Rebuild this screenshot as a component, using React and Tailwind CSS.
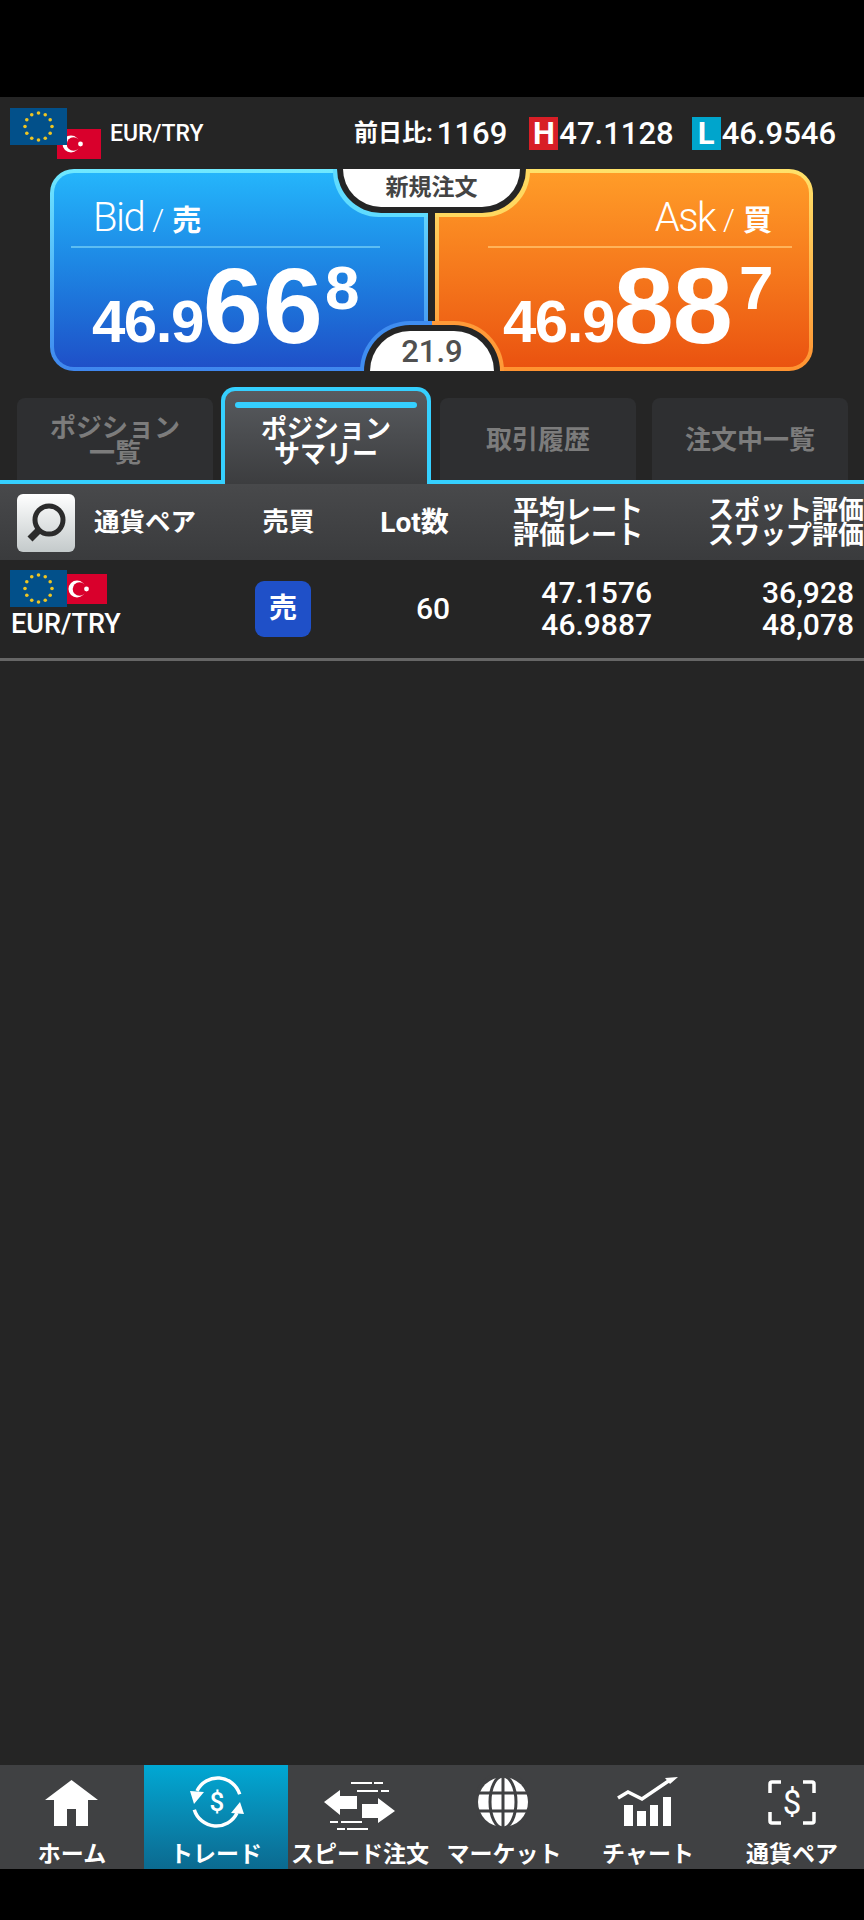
const eurStars = Array.from({ length: 12 }, (_, i) => i);

function EuFlag({ className }) {
    return (
        <svg viewBox="0 0 57 37" className={className}>
            <rect width="57" height="37" fill="#02508a" />
            {eurStars.map(i => (
                <circle key={i} cx={28.5 + 13.5 * Math.sin(i * Math.PI / 6)} cy={18.5 - 13.5 * Math.cos(i * Math.PI / 6)} r="1.8" fill="#eec523" />
            ))}
        </svg>
    );
}

function TrFlag({ className }) {
    return (
        <svg viewBox="0 0 44 30" className={className}>
            <rect width="44" height="30" fill="#d9002c" />
            <circle cx="14" cy="15" r="8.5" fill="#fff" />
            <circle cx="16.500" cy="15" r="6.8" fill="#d9002c" />
            <circle cx="23.500" cy="15" r="2.4" fill="#fff" />
        </svg>
    );
}

function HomeIcon() {
    return (
        <svg width="80" height="56" viewBox="0 0 80 56" fill="#fff">
            <path d="M39.500 5L66 25H56V51H44V34H35V51H22V25H13Z" />
        </svg>
    );
}

function TradeIcon() {
    return (
        <svg width="80" height="56" viewBox="0 0 80 56">
            <g transform="translate(41 27)">
                <path d="M-20 -11A23 23 0 0 1 22.700 -7.700M20 11A23 23 0 0 1 -22.700 7.700" fill="none" stroke="#fff" strokeWidth="3.500" />
                <path d="M-27 -11L-13 -10L-23 2ZM27 12L14 11L23 0Z" fill="#fff" />
                <text x="0" y="9" textAnchor="middle" fill="#fff" fontSize="26" fontWeight="500" fontFamily="Roboto, sans-serif">$</text>
            </g>
        </svg>
    );
}

function SpeedIcon() {
    return (
        <svg width="80" height="56" viewBox="0 0 80 56" fill="#fff">
            <path d="M4 27L20 15V21H37V34H20V40Z" />
            <path d="M75 36L58 23V29H42V43H58V48Z" />
            <path d="M31 8H52M54 8H63M37 16H58M61 16H69M10 47H18M21 47H42M17 54H25M27 54H48" stroke="#fff" strokeWidth="2" />
        </svg>
    );
}

function GlobeIcon() {
    return (
        <svg width="80" height="56" viewBox="0 0 80 56">
            <g transform="translate(39 27)" fill="none" stroke="#404143" strokeWidth="3">
                <circle r="25" fill="#fff" stroke="none" />
                <ellipse rx="13" ry="26" />
                <path d="M0 -26V26M-26 -9H26M-26 9H26" />
                <path d="M-13 -26Q-27 -14 -24 -9M13 -26Q27 -14 24 -9M-13 26Q-27 14 -24 9M13 26Q27 14 24 9" />
            </g>
        </svg>
    );
}

function ChartIcon() {
    return (
        <svg width="80" height="56" viewBox="0 0 80 56" fill="#fff">
            <path d="M16 30H25V51H16ZM29 36H38V51H29ZM42 30H50V51H42ZM55 22H63V51H55Z" />
            <path d="M10 23L20 17L34 24L62 5" fill="none" stroke="#fff" strokeWidth="3.500" />
            <path d="M57 3L70 2L62 9Z" />
        </svg>
    );
}

function PairIcon() {
    return (
        <svg width="80" height="56" viewBox="0 0 80 56">
            <path d="M18 18V9Q18 7 20 7H29M51 7H60Q62 7 62 9V18M18 37V46Q18 48 20 48H29M51 48H60Q62 48 62 46V37" fill="none" stroke="#fff" strokeWidth="3.500" />
            <text x="40" y="39" textAnchor="middle" fill="#fff" fontSize="33" fontFamily="Roboto, sans-serif">$</text>
        </svg>
    );
}

const navItems = [
    { label: 'ホーム', icon: HomeIcon },
    { label: 'トレード', icon: TradeIcon, active: true },
    { label: 'スピード注文', icon: SpeedIcon },
    { label: 'マーケット', icon: GlobeIcon },
    { label: 'チャート', icon: ChartIcon },
    { label: '通貨ペア', icon: PairIcon },
];

function QuotePanel({ side }) {
    const bid = side === 'bid';
    return (
        <div className={`w-[378px] h-[202px] p-[4px] rounded-[24px] ${bid ? 'bg-linear-to-b from-[#6fe9ff] to-[#3f86ee]' : 'bg-linear-to-b from-[#ffe26a] to-[#ff9230]'}`}>
            <div className={`h-full rounded-[20px] flex flex-col ${bid ? 'pl-[17px] pr-[44px] bg-linear-to-b from-[#25b5fb] to-[#1f50c8]' : 'pl-[49px] pr-[17px] bg-linear-to-b from-[#ff9c28] to-[#ea5210]'}`}>
                <div className={`h-[75px] border-b-2 flex items-end pb-[8px] font-light text-white ${bid ? 'border-[#5cbdf2] pl-[22px]' : 'border-[#ffb35a] justify-end pr-[20px]'}`}>
                    <span className="text-[40px] leading-[40px] tracking-[-1.5px]">{bid ? 'Bid' : 'Ask'}</span>
                    <span className="text-[30px] leading-[36px] mx-[8px]">/</span>
                    <span className="text-[29px] leading-[34px] font-bold">{bid ? '売' : '買'}</span>
                </div>
                <div className={`flex items-end text-white font-bold font-['Liberation_Sans',sans-serif] mt-[4px] leading-none ${bid ? 'pl-[21px]' : 'pl-[15px]'}`}>
                    <span className="text-[60px] tracking-[-1.5px] leading-none mb-[8px]">46.9</span>
                    <span className={`text-[108px] leading-none ${bid ? '' : 'tracking-[-1px]'}`}>{bid ? '66' : '88'}</span>
                    <span className={`text-[62px] leading-none mb-[41px] ${bid ? 'ml-[2px]' : 'ml-[7px]'}`}>{bid ? '8' : '7'}</span>
                </div>
            </div>
        </div>
    );
}

function SideTab({ children }) {
    return (
        <div className="w-[196px] h-[82px] pt-[3px] bg-[#2e2f31] rounded-t-[8px] flex items-center justify-center text-center text-[#7c7c7c] font-bold text-[26px] leading-[25px]">
            {children}
        </div>
    );
}

export default function App() {
    return (
        <div className="w-[864px] h-[1920px] bg-black pt-[97px] flex flex-col text-white font-['Roboto','Noto_Sans_CJK_JP',sans-serif]">
            <div className="flex-1 bg-[#252525] flex flex-col">
                {/* Header */}
                <div className="h-[72px] flex items-center font-medium">
                    <div className="relative w-[110px] h-[72px] shrink-0">
                        <EuFlag className="absolute left-[10px] top-[11px] w-[57px] h-[37px] z-10" />
                        <TrFlag className="absolute left-[57px] top-[32px] w-[44px] h-[30px]" />
                    </div>
                    <span className="text-[23px] pt-[3px]">EUR/TRY</span>
                    <div className="ml-auto pr-[28px] flex items-center text-[31px] leading-[33px]">
                        <span className="text-[24px] font-bold">前日比:</span>
                        <span className="ml-[4px]">1169</span>
                        <span className="ml-[22px] w-[29px] h-[33px] bg-[#d81e26] text-center font-bold">H</span>
                        <span className="ml-[1px]">47.1128</span>
                        <span className="ml-[18px] w-[29px] h-[33px] bg-[#00a5cc] text-center font-bold">L</span>
                        <span className="ml-[1px]">46.9546</span>
                    </div>
                </div>

                {/* Bid / Ask */}
                <div className="relative flex gap-[7px] pl-[50px]">
                    <QuotePanel side="bid" />
                    <QuotePanel side="ask" />
                    <div className="absolute left-[333px] top-0 w-[197px] h-[48px] rounded-b-[46px] bg-[linear-gradient(90deg,#5fdcff_50%,#ffd860_50%)]">
                        <div className="mx-[4px] h-[44px] rounded-b-[44px] bg-[#252525] px-[6px] pb-[6px]">
                            <div className="h-full rounded-b-[38px] bg-white flex items-center justify-center text-[#444] font-bold text-[23px]">新規注文</div>
                        </div>
                    </div>
                    <div className="absolute left-[428px] top-[44px] w-[7px] h-[5px] bg-[#252525]"></div>
                    <div className="absolute left-[360px] bottom-0 w-[144px] h-[50px] rounded-t-[52px] bg-[linear-gradient(90deg,#3f8df0_50%,#ff9a38_50%)]">
                        <div className="mx-[4px] mt-[4px] h-[46px] rounded-t-[50px] bg-[#252525] px-[6px] pt-[6px]">
                            <div className="h-[40px] rounded-t-[44px] bg-white flex items-center justify-center text-[#505050] font-medium text-[31px] leading-none">21.9</div>
                        </div>
                    </div>
                </div>

                {/* Tabs */}
                <div className="mt-[16px] h-[97px] flex items-end pl-[17px] border-b-4 border-[#35d0ff]">
                    <SideTab>ポジション<br />一覧</SideTab>
                    <div className="relative z-10 ml-[8px] mr-[9px] -mb-[4px] w-[210px] h-[97px] border-4 border-b-0 border-[#35d0ff] rounded-t-[14px] bg-linear-to-b from-[#585b5f] to-[#3c3d3f] px-[10px] pt-[11px] text-center font-bold text-[26px] leading-[25px]">
                        <div className="h-[6px] rounded-full bg-[#35d0ff] mb-[9px]"></div>
                        ポジション<br />サマリー
                    </div>
                    <SideTab>取引履歴</SideTab>
                    <div className="w-[16px]"></div>
                    <SideTab>注文中一覧</SideTab>
                </div>

                {/* Table head */}
                <div className="h-[76px] pt-[1px] bg-linear-to-b from-[#48494b] to-[#3a3b3d] flex items-center font-bold text-[26px] leading-[25px] overflow-hidden">
                    <div className="ml-[17px] w-[58px] h-[58px] rounded-[6px] bg-linear-to-b from-white to-[#c4cacb] flex items-center justify-center">
                        <svg width="58" height="58" viewBox="0 0 58 58" fill="none" stroke="#2b2b2b">
                            <circle cx="32" cy="26" r="14" strokeWidth="5" />
                            <path d="M21 37L13 45" strokeWidth="7" />
                        </svg>
                    </div>
                    <span className="ml-[19px] w-[170px] text-[25.5px]">通貨ペア</span>
                    <span className="w-[119px]">売買</span>
                    <span className="w-[134px] text-[28px]">Lot数</span>
                    <span className="w-[195px] shrink-0">平均レート<br />評価レート</span>
                    <span className="shrink-0 whitespace-nowrap">スポット評価<br />スワップ評価</span>
                </div>

                {/* Row */}
                <div className="h-[101px] border-b-[3px] border-[#666] flex font-medium">
                    <div className="w-[255px] pt-[10px] pl-[10px]">
                        <div className="flex items-center">
                            <EuFlag className="relative z-10 w-[57px] h-[37px]" />
                            <TrFlag className="-ml-[4px] w-[44px] h-[30px]" />
                        </div>
                        <div className="text-[27px] leading-[32px] pt-[1px] pl-[1px]">EUR/TRY</div>
                    </div>
                    <div className="w-[56px] h-[56px] mt-[21px] rounded-[9px] bg-[#1f50c8] flex items-center justify-center text-[28px] font-bold">売</div>
                    <div className="w-[139px] text-right text-[30px] leading-[98px]">60</div>
                    <div className="w-[202px] pt-[17px] text-right text-[30px] leading-[32px]">47.1576<br />46.9887</div>
                    <div className="w-[202px] pt-[17px] text-right text-[30px] leading-[32px]">36,928<br />48,078</div>
                </div>
            </div>

            {/* Bottom nav */}
            <div className="h-[104px] bg-[#404143] grid grid-cols-6">
                {navItems.map(item => {
                    const Icon = item.icon;
                    return (
                        <div key={item.label} className={`pt-[10px] flex flex-col items-center ${item.active ? 'bg-linear-to-b from-[#00a8d4] to-[#0b6a90]' : ''}`}>
                            <Icon />
                            <span className="mt-[10px] text-[23px] leading-[28px] font-bold whitespace-nowrap">{item.label}</span>
                        </div>
                    );
                })}
            </div>
            <div className="h-[51px] bg-black"></div>
        </div>
    );
}
